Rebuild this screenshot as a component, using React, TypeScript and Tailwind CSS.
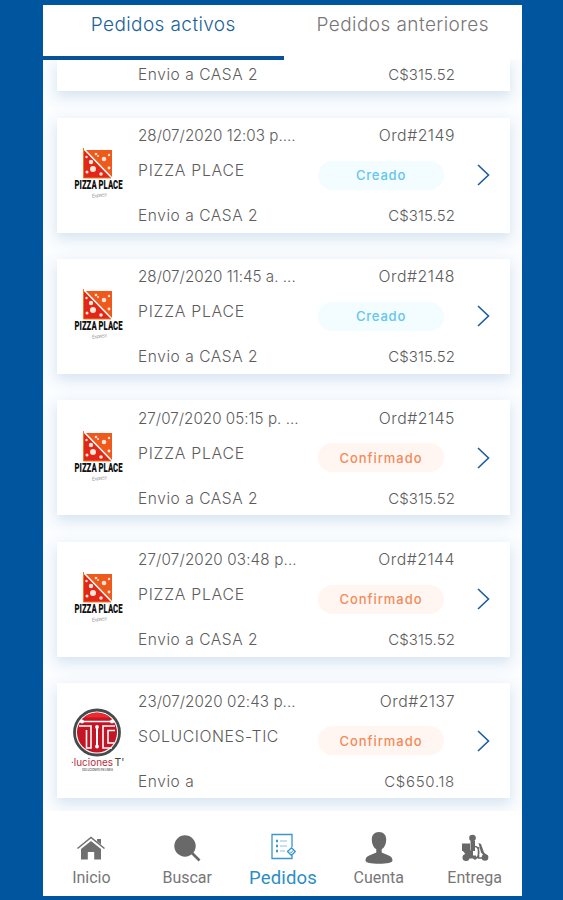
import React from "react";
import clsx from "clsx";

type Status = "Creado" | "Confirmado";

type Order = {
  id: string;
  date: string;
  dateClass: string;
  store: string;
  storeClass: string;
  address: string;
  total: string;
  status: Status;
  logo: "pizza" | "tic";
};

const orders: Order[] = [
  { id: "2149", date: "28/07/2020 12:03 p....", dateClass: "tracking-[0.02px]", store: "PIZZA PLACE", storeClass: "tracking-[0.75px]", address: "CASA 2", total: "C$315.52", status: "Creado", logo: "pizza" },
  { id: "2148", date: "28/07/2020 11:45 a. ...", dateClass: "tracking-[0.02px]", store: "PIZZA PLACE", storeClass: "tracking-[0.75px]", address: "CASA 2", total: "C$315.52", status: "Creado", logo: "pizza" },
  { id: "2145", date: "27/07/2020 05:15 p. ...", dateClass: "tracking-[0.02px]", store: "PIZZA PLACE", storeClass: "tracking-[0.75px]", address: "CASA 2", total: "C$315.52", status: "Confirmado", logo: "pizza" },
  { id: "2144", date: "27/07/2020 03:48 p...", dateClass: "tracking-[0.15px]", store: "PIZZA PLACE", storeClass: "tracking-[0.75px]", address: "CASA 2", total: "C$315.52", status: "Confirmado", logo: "pizza" },
  { id: "2137", date: "23/07/2020 02:43 p...", dateClass: "tracking-[0.06px]", store: "SOLUCIONES-TIC", storeClass: "tracking-[0.55px]", address: "", total: "C$650.18", status: "Confirmado", logo: "tic" },
];

const PizzaLogo = () => (
  <svg width="50" height="54" viewBox="0 0 50 54" className="overflow-visible">
    <path d="M10 2h28v28H10z" fill="#ef5a1c" />
    <path d="M9 1v29h29z" fill="#e02718" />
    <path d="M9.500 0.500 38 30" stroke="#fff" strokeWidth="1.500" />
    <path d="M9.500 0v30H37" fill="none" stroke="#f07a20" strokeWidth="1" />
    <g fill="#ffe6d8">
      <circle cx="17" cy="14" r="2.200" />
      <circle cx="19" cy="21" r="3" />
      <circle cx="13" cy="24" r="1.500" />
      <circle cx="27" cy="26" r="1.800" />
      <circle cx="12.500" cy="9" r="1.200" />
      <circle cx="30" cy="11" r="2.300" />
      <circle cx="22" cy="6" r="1.300" />
      <circle cx="35" cy="7" r="1.200" />
      <circle cx="35" cy="20" r="1.400" />
      <circle cx="24" cy="8" r="1" />
    </g>
    <text x="0.500" y="41" textLength="48" lengthAdjust="spacingAndGlyphs" fontFamily="Roboto, sans-serif" fontWeight="900" fontSize="12" fill="#111">PIZZA PLACE</text>
    <text x="18" y="49" textLength="15" transform="rotate(-8 25 48)" fontFamily="Lato, sans-serif" fontStyle="italic" fontSize="5.500" fill="#444">Express</text>
  </svg>
);

const TicLogo = () => (
  <svg width="54" height="64" viewBox="0 0 54 64" className="overflow-visible">
    <circle cx="27" cy="24.500" r="22.500" fill="#fff" stroke="#434b4f" strokeWidth="2.800" />
    <circle cx="27" cy="24.500" r="20" fill="#c41525" />
    <path d="M14 9.500a20 20 0 0 1 26 0z" fill="#ee2a2e" />
    <g fill="none" stroke="#fff" strokeWidth="1.600">
      <path d="M10 13.500h34" />
      <path d="M9 18h12v22h-4.500V22" />
      <path d="M27 19v19" strokeWidth="2" />
      <path d="M45 18H33v22h9M45 22.500h-7V35h6" />
    </g>
    <g fill="#fff">
      <circle cx="12" cy="13.500" r="2" />
      <circle cx="42" cy="13.500" r="2" />
      <circle cx="27" cy="19" r="1.900" />
      <circle cx="27" cy="38.500" r="1.900" />
    </g>
    <text x="1" y="58" textLength="42" lengthAdjust="spacingAndGlyphs" fontFamily="Inter, sans-serif" fontSize="10.500" fontWeight="400" fill="#b82c3a">·luciones</text>
    <text x="44.500" y="58" fontFamily="Inter, sans-serif" fontSize="10.500" fontWeight="400" fill="#444">T'</text>
    <text x="12" y="62.500" textLength="31" lengthAdjust="spacingAndGlyphs" fontFamily="Inter, sans-serif" fontWeight="700" fontSize="3" fill="#777">SOLUCIONES EN LINEA</text>
  </svg>
);

const Chevron = () => (
  <svg width="13" height="22" viewBox="0 0 13 22" fill="none" stroke="#1c5c9c" strokeWidth="1.600">
    <path d="m1 1 10.500 10L1 21" />
  </svg>
);

const StatusPill = ({ status }: { status: Status }) => (
  <span
    className={clsx(
      "flex h-[29px] w-[126px] items-center justify-center rounded-full text-[13px] leading-5 font-medium",
      status === "Creado" ? "bg-[#f3fcff] tracking-[0.8px] text-[#62c6ef]" : "bg-[#fff6f2] tracking-[0.95px] text-[#f48a58]"
    )}
  >
    {status}
  </span>
);

const OrderCard = ({ order }: { order: Order }) => (
  <div className="grid h-[115px] shrink-0 grid-cols-[81px_180px_137px_1fr] bg-white shadow-[0_5px_13px_1px_rgba(70,130,180,0.2)]">
    <div className={order.logo === "pizza" ? "pt-[30.500px] pl-[16.500px]" : "pt-[25px] pl-[13px]"}>
      {order.logo === "pizza" ? <PizzaLogo /> : <TicLogo />}
    </div>
    <div className="flex flex-col whitespace-nowrap">
      <p className={clsx("mt-[8.500px] h-5 text-[15.200px] leading-5", order.dateClass)}>{order.date}</p>
      <p className={clsx("mt-[15px] h-5 text-[15.800px] leading-5", order.storeClass)}>{order.store}</p>
      <p className="mt-[25px] h-5 text-[15.500px] leading-5 tracking-[0.56px]">Envio a {order.address}</p>
    </div>
    <div className="flex flex-col items-end">
      <p className="mt-[8.500px] h-5 text-[15.800px] leading-5 tracking-[0.5px]">Ord#{order.id}</p>
      <div className="mt-[14.500px] mr-[11px]">
        <StatusPill status={order.status} />
      </div>
      <p className={clsx("mt-[16.500px] h-5 leading-5", order.logo === "tic" ? "tracking-[0.7px]" : "tracking-[0.1px]")}>{order.total}</p>
    </div>
    <div className="pt-[46.500px] pl-[22px]">
      <Chevron />
    </div>
  </div>
);

const HomeIcon = () => (
  <svg width="30" height="26" viewBox="0 0 30 26" fill="#707070">
    <path d="M15 6 25 14v10.500h-6.800V17h-6.400v7.500H5V14z" />
    <path d="M1.500 13.500 15 2.500l13.500 11" fill="none" stroke="#707070" strokeWidth="1.500" />
    <path d="M21 4h4v5.500l-4-3.200z" />
  </svg>
);

const SearchIcon = () => (
  <svg width="28" height="28" viewBox="0 0 28 28" fill="#696969">
    <circle cx="12" cy="12" r="10.700" />
    <path d="m18 18 8.500 8.500" stroke="#696969" strokeWidth="2.600" />
  </svg>
);

const OrdersIcon = () => (
  <svg width="26" height="27" viewBox="0 0 26 27" fill="none" stroke="#3996cf" strokeWidth="1.300" className="relative -top-0.5">
    <path d="M22 14V1.500H2v24h20v-3" />
    <path d="M10 8h7M10 13h7M10 18h5" stroke="#b4d6e9" />
    <path d="M6 8h2M6 13h2M6 18h2" strokeWidth="2.400" />
    <path d="m21.500 14.800 3.800 3.700-3.800 4-4-4z" fill="#fff" strokeLinejoin="round" />
    <path d="m19.800 18.500 1.300 1.300 2.200-2.600" strokeWidth="1" />
  </svg>
);

const AccountIcon = () => (
  <svg width="28" height="32" viewBox="0 0 28 32" fill="#686868">
    <path d="M14 0C9.500 0 6.500 3 6.800 8c.2 4.300 1.600 7.500 4.500 9.300v3.200C7 23 .5 23 .5 28.500.5 31 6 31.700 14 31.700s13.500-.7 13.500-3.200c0-5.500-6.500-5.500-10.800-8v-3.200c2.900-1.800 4.300-5 4.500-9.300C21.500 3 18.500 0 14 0z" />
  </svg>
);

const ScooterIcon = () => (
  <svg width="28" height="28" viewBox="0 0 28 28" fill="#686868">
    <circle cx="11.500" cy="4" r="3.300" />
    <path d="M9.500 7h4.500v10H9.500zM1 9.500h8V17H1z" />
    <path d="M1.500 16.500H12v5h3v3H8z" />
    <path d="m17.500 9 2.500 1 3 8.500 4.500 4-3 1-4.500-5z" />
    <path d="M14 12.500c5 0 5 11.500 0 11.500M17.500 13v11h4" fill="none" stroke="#686868" strokeWidth="1.600" />
    <circle cx="5" cy="23.500" r="3.500" />
    <circle cx="24" cy="23.500" r="3.300" />
    <circle cx="14" cy="24" r="1.800" />
  </svg>
);

const navItems = [
  { label: "Inicio", icon: <HomeIcon /> },
  { label: "Buscar", icon: <SearchIcon /> },
  { label: "Pedidos", icon: <OrdersIcon />, active: true },
  { label: "Cuenta", icon: <AccountIcon /> },
  { label: "Entrega", icon: <ScooterIcon /> },
];

const App = () => {
  return (
    <div className="h-[900px] w-[563px] overflow-hidden bg-[#00559f] pt-[5px] pl-[43px] font-['Inter',sans-serif] text-[15px] font-light text-[#5c5c5c]">
      <div className="flex h-[891px] w-[479px] flex-col bg-white">
        <div className="grid h-[55px] shrink-0 grid-cols-[240.500px_1fr] text-center text-[19px]">
          <div className="border-b-4 border-[#07529b] pt-[6px] tracking-[0.4px] text-[#20629a]">Pedidos activos</div>
          <div className="pt-[6px] tracking-[0.42px] text-[#777]">Pedidos anteriores</div>
        </div>

        <div className="flex h-[751px] shrink-0 flex-col gap-[26.400px] overflow-hidden bg-[#fbfdff] pr-3 pl-[14px]">
          <div className="grid h-[31.200px] shrink-0 grid-cols-[81px_180px_137px_1fr] bg-white shadow-[0_5px_13px_1px_rgba(70,130,180,0.2)]">
            <p className="col-start-2 pt-[5px] text-[15.500px] leading-5 tracking-[0.56px]">Envio a CASA 2</p>
            <p className="pt-[5px] text-right leading-5 tracking-[0.1px]">C$315.52</p>
          </div>
          {orders.map((order) => (
            <OrderCard key={order.id} order={order} />
          ))}
        </div>

        <nav className="grid flex-1 grid-cols-5 bg-white font-['Roboto',sans-serif] text-[#777]">
          {navItems.map((item) => (
            <div key={item.label} className="flex flex-col items-center pt-[20px] pl-px">
              <div className="flex h-[34px] items-center">{item.icon}</div>
              <span className={clsx("mt-px leading-6 font-normal", item.active ? "text-[18.500px] tracking-[0.2px] text-[#2c8dc8]" : "text-[16px]")}>
                {item.label}
              </span>
            </div>
          ))}
        </nav>
      </div>
    </div>
  );
};

export default App;
